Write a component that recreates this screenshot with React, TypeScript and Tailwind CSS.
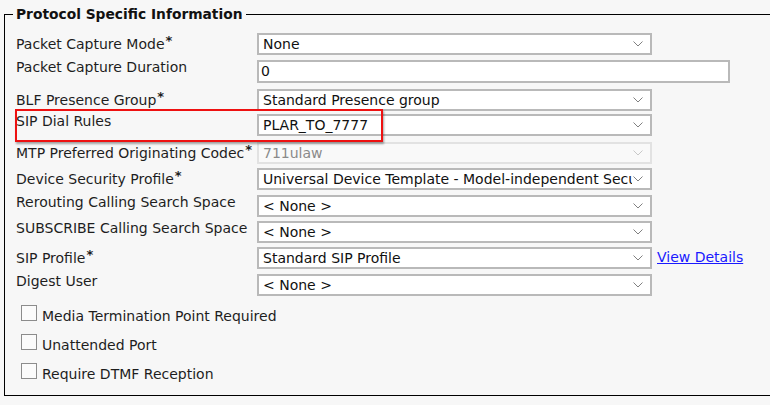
import React from "react";

const Chevron = ({ light }: { light?: boolean }) => (
  <svg width="10" height="6" viewBox="0 0 10 6" className="absolute right-[7px] top-1/2 -translate-y-1/2">
    <polyline points="0.5,0.5 5,5 9.5,0.5" fill="none" stroke={light ? "#c8c8c8" : "#808080"} strokeWidth="1" />
  </svg>
);

function Select({ value, disabled }: { value: string; disabled?: boolean }) {
  return (
    <div
      className={
        "relative h-[22px] w-[395px] shrink-0 flex items-center pl-[4px] pr-[18px] overflow-hidden whitespace-nowrap border-2 " +
        (disabled ? "border-[#e2e2e2] bg-[#f9f9f9] text-[#8a8a8a]" : "border-[#b9b9b9] bg-white text-[#111]")
      }
    >
      <span className="overflow-hidden">{value}</span>
      <Chevron light={disabled} />
    </div>
  );
}

function Label({ text, req }: { text: string; req?: boolean }) {
  return (
    <div className="w-[241px] shrink-0 text-[#1e1e1e] whitespace-nowrap -mt-[1px]">
      {text}
      {req && <span className="font-bold text-[13px] align-[4px] ml-[1px]">*</span>}
    </div>
  );
}

function Row({ h, label, req, children }: { h: string; label: string; req?: boolean; children: React.ReactNode }) {
  return (
    <div className={"flex items-start " + h}>
      <Label text={label} req={req} />
      {children}
    </div>
  );
}

function Check({ label }: { label: string }) {
  return (
    <div className="flex items-start h-[29px] ml-[5px]">
      <div className="w-[16px] h-[16px] border border-[#8c8c8c] bg-[#fbfbfb] shrink-0" />
      <span className="ml-[5px] text-[#1e1e1e] mt-[3px]">{label}</span>
    </div>
  );
}

export default function App() {
  return (
    <div className="w-[770px] h-[405px] bg-[#f7f7f7] overflow-hidden font-['DejaVu_Sans',Verdana,sans-serif] text-[14px] leading-[17px] relative">
      <fieldset className="ml-[4px] mt-[6px] w-[820px] h-[390px] border border-black pl-[11px] pt-[10px] m-0 min-w-0">
        <legend className="-ml-[3px] px-[3px] font-bold text-[13.8px] leading-[17px] text-[#111]">
          Protocol Specific Information
        </legend>
        <div className="flex flex-col">
          <Row h="h-[27px]" label="Packet Capture Mode" req>
            <Select value="None" />
          </Row>
          <Row h="h-[29px]" label="Packet Capture Duration">
            <div className="h-[23px] w-[473px] border-2 border-[#b9b9b9] bg-white flex items-center pl-[2px] text-[#111]">0</div>
          </Row>
          <Row h="h-[25px]" label="BLF Presence Group" req>
            <Select value="Standard Presence group" />
          </Row>
          <Row h="h-[28px]" label="SIP Dial Rules">
            <Select value="PLAR_TO_7777" />
          </Row>
          <Row h="h-[26px]" label="MTP Preferred Originating Codec" req>
            <Select value="711ulaw" disabled />
          </Row>
          <Row h="h-[27px]" label="Device Security Profile" req>
            <Select value="Universal Device Template - Model-independent Secu" />
          </Row>
          <Row h="h-[26px]" label="Rerouting Calling Search Space">
            <Select value="< None >" />
          </Row>
          <Row h="h-[26px]" label="SUBSCRIBE Calling Search Space">
            <Select value="< None >" />
          </Row>
          <Row h="h-[27px]" label="SIP Profile" req>
            <Select value="Standard SIP Profile" />
            <a href="#" className="ml-[5px] mt-[2px] text-[#1a1aff] underline">View Details</a>
          </Row>
          <Row h="h-[29px]" label="Digest User">
            <Select value="< None >" />
          </Row>
          <div className="mt-[2px]">
            <Check label="Media Termination Point Required" />
            <Check label="Unattended Port" />
            <Check label="Require DTMF Reception" />
          </div>
        </div>
      </fieldset>
      <div className="absolute left-[15px] top-[109px] w-[368px] h-[33px] border-2 border-[#ee1111] shadow-[1px_2px_2px_rgba(0,0,0,0.35)] pointer-events-none" />
    </div>
  );
}
